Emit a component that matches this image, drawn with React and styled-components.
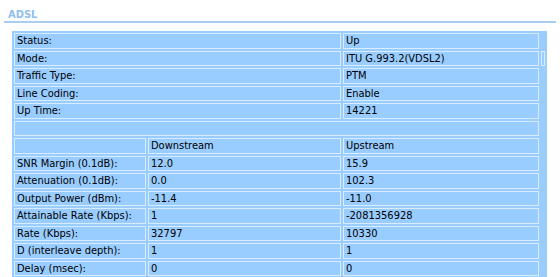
import React from "react";
import styled, { createGlobalStyle } from "styled-components";

const GlobalStyle = createGlobalStyle`
  body {
    margin: 0;
    background: #fff;
    font-family: "DejaVu Sans Condensed", "DejaVu Sans", sans-serif;
  }
`;

const Page = styled.div`
  width: 560px;
  height: 277px;
  overflow: hidden;
`;

const Title = styled.h1`
  margin: 0;
  padding: 8px 0 0 8px;
  height: 13px;
  font-size: 11px;
  line-height: 13px;
  font-weight: bold;
  color: #8fc0ef;
`;

const Rule = styled.div`
  margin: 0 4px;
  height: 2px;
  background: #a9cdef;
`;

const Table = styled.table`
  margin: 8px 0 0 12px;
  width: 535px;
  table-layout: fixed;
  border-collapse: separate;
  border-spacing: 2px;
  background: #99ccff;
  font-size: 11px;
  color: #000;
`;

const Cell = styled.td`
  height: 13.5px;
  padding: 0 2px;
  line-height: 13.5px;
  border: 1px solid #d9ecfd;
  white-space: nowrap;
  overflow: hidden;
  vertical-align: middle;
`;

const Filler = styled.td`
  padding: 0;
  border: 1px solid ${(p) => (p.$framed ? "#d9ecfd" : "transparent")};
`;

const info = [
  ["Status:", "Up"],
  ["Mode:", "ITU G.993.2(VDSL2)"],
  ["Traffic Type:", "PTM"],
  ["Line Coding:", "Enable"],
  ["Up Time:", "14221"],
];

const stats = [
  ["SNR Margin (0.1dB):", "12.0", "15.9"],
  ["Attenuation (0.1dB):", "0.0", "102.3"],
  ["Output Power (dBm):", "-11.4", "-11.0"],
  ["Attainable Rate (Kbps):", "1", "-2081356928"],
  ["Rate (Kbps):", "32797", "10330"],
  ["D (interleave depth):", "1", "1"],
  ["Delay (msec):", "0", "0"],
];

export default function App() {
  return (
    <Page>
      <GlobalStyle />
      <Title>ADSL</Title>
      <Rule />
      <Table>
        <colgroup>
          <col style={{ width: 132 }} />
          <col style={{ width: 193 }} />
          <col style={{ width: 196 }} />
          <col style={{ width: 4 }} />
        </colgroup>
        <tbody>
          {info.map(([label, value]) => (
            <tr key={label}>
              <Cell colSpan={2}>{label}</Cell>
              <Cell>{value}</Cell>
              <Filler $framed={label === "Mode:"} />
            </tr>
          ))}
          <tr>
            <Cell colSpan={3}></Cell>
            <Filler />
          </tr>
          <tr>
            <Cell></Cell>
            <Cell>Downstream</Cell>
            <Cell>Upstream</Cell>
            <Filler />
          </tr>
          {stats.map(([label, down, up]) => (
            <tr key={label}>
              <Cell>{label}</Cell>
              <Cell>{down}</Cell>
              <Cell>{up}</Cell>
              <Filler />
            </tr>
          ))}
        </tbody>
      </Table>
    </Page>
  );
}
